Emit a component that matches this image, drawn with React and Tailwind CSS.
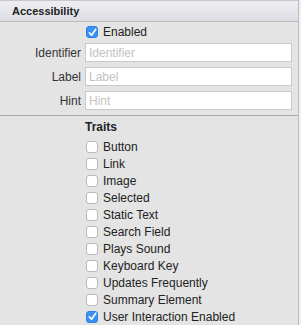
import React from "react";

const font = { fontFamily: '"Liberation Sans", Arial, sans-serif' };

function Box({ checked }) {
  if (checked) {
    return (
      <div className="w-[12px] h-[12px] rounded-[3px] bg-[#3a92f4] border border-[#2f80e0] flex items-center justify-center shrink-0">
        <svg width="9" height="9" viewBox="0 0 9 9">
          <path d="M1.3 4.8 L3.5 7.2 L7.8 1.3" fill="none" stroke="white" strokeWidth="1.6" strokeLinecap="round" strokeLinejoin="round" />
        </svg>
      </div>
    );
  }
  return <div className="w-[12px] h-[12px] rounded-[3px] bg-white border border-[#b9b9b9] shrink-0" />;
}

const traits = [
  ["Button", false],
  ["Link", false],
  ["Image", false],
  ["Selected", false],
  ["Static Text", false],
  ["Search Field", false],
  ["Plays Sound", false],
  ["Keyboard Key", false],
  ["Updates Frequently", false],
  ["Summary Element", false],
  ["User Interaction Enabled", true],
];

function Field({ label }) {
  return (
    <div className="flex items-center h-[19px]">
      <div className="w-[81px] text-right text-[12px] text-[#333]">{label}</div>
      <div className="ml-[4px] w-[207px] h-[19px] bg-white border border-[#c9c9c9] flex items-center pl-[3px] text-[12px] text-[#c2c2c2]">
        {label}
      </div>
    </div>
  );
}

export default function App() {
  return (
    <div className="w-[301px] h-[325px] flex overflow-hidden" style={font}>
      <div className="w-[298px] h-full bg-[#e4e4e4] flex flex-col">
        <div className="h-[22px] shrink-0 border-t border-[#c8c8c8] border-b border-b-[#bcbcbc] bg-gradient-to-b from-[#efeff3] to-[#dddee4] flex items-center pl-[12px] text-[11px] font-bold text-[#222]">
          Accessibility
        </div>
        <div className="h-[20px] flex items-center pl-[86px]">
          <Box checked />
          <span className="ml-[5px] text-[12px] text-[#222]">Enabled</span>
        </div>
        <div className="mt-[1px] flex flex-col gap-[5px]">
          <Field label="Identifier" />
          <Field label="Label" />
          <Field label="Hint" />
        </div>
        <div className="mt-[5px] border-t border-[#a9a9a9]" />
        <div className="mt-[4px] pl-[85px] text-[12px] leading-[14px] font-bold text-[#222]">Traits</div>
        <div className="mt-[4px] flex flex-col">
          {traits.map(([t, c]) => (
            <div key={t} className="h-[17px] flex items-center pl-[86px]">
              <Box checked={c} />
              <span className="ml-[5px] text-[12px] text-[#222]">{t}</span>
            </div>
          ))}
        </div>
      </div>
      <div className="w-[1px] h-full bg-[#bdbdbd]" />
      <div className="w-[2px] h-full bg-[#f0f0f0]" />
    </div>
  );
}
